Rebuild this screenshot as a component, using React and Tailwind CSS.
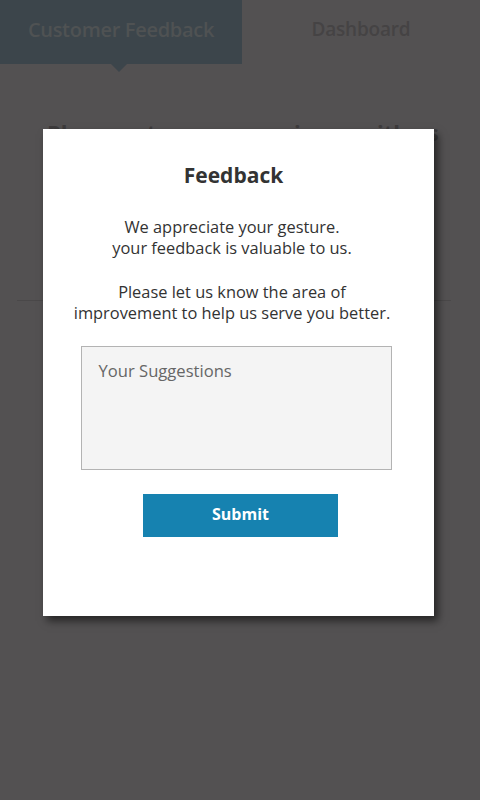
export default function App() {
  const font = { fontFamily: '"Open Sans", "Noto Sans", sans-serif' };
  return (
    <div className="relative w-[480px] h-[800px] overflow-hidden bg-[#535152]" style={font}>
      {/* Tabs */}
      <div className="flex h-[64px]">
        <div className="relative w-[242px] bg-[#3c454b] flex items-center justify-center pb-[5px]">
          <span className="text-[20px] font-semibold text-[#4f5253] tracking-[-0.3px]">Customer Feedback</span>
          <div className="absolute left-[111px] -bottom-[8px] w-0 h-0 border-l-[8px] border-r-[8px] border-t-[8px] border-l-transparent border-r-transparent border-t-[#3c454b]" />
        </div>
        <div className="flex-1 flex items-center justify-center pb-[5px]">
          <span className="text-[19px] font-semibold text-[#454344] tracking-[-0.2px]">Dashboard</span>
        </div>
      </div>
      {/* Background content */}
      <div className="pt-[54px] pl-[47px]">
        <div className="text-[22px] font-bold text-[#3d3b3c] whitespace-nowrap leading-[28px]">Please rate your experience with us</div>
      </div>
      <div className="mt-[154px] ml-[17px] w-[434px] h-px bg-[#4a4849]" />

      {/* Modal */}
      <div className="absolute left-[43px] top-[129px] w-[391px] h-[487px] bg-white shadow-[4px_5px_8px_rgba(0,0,0,0.55)] flex flex-col items-center">
        <h2 className="mt-[32px] mr-[10px] text-[21px] font-bold text-[#333333] leading-[28px]">Feedback</h2>
        <p className="mt-[27px] mr-[13px] text-[16.4px] text-[#333333] leading-[21px] text-center">
          We appreciate your gesture.<br />your feedback is valuable to us.
        </p>
        <p className="mt-[23px] mr-[13px] text-[16.4px] text-[#333333] leading-[21px] text-center">
          Please let us know the area of<br />improvement to help us serve you better.
        </p>
        <div className="mt-[23px] mr-[5px] w-[311px] h-[124px] bg-[#f4f4f4] border border-[#b3b3b3] px-[17px] pt-[12px]">
          <span className="text-[16.6px] text-[#666666]">Your Suggestions</span>
        </div>
        <button className="mt-[24px] ml-[4px] w-[195px] h-[43px] pb-[3px] bg-[#1682b0] text-white text-[16px] font-bold">Submit</button>
      </div>
    </div>
  );
}
